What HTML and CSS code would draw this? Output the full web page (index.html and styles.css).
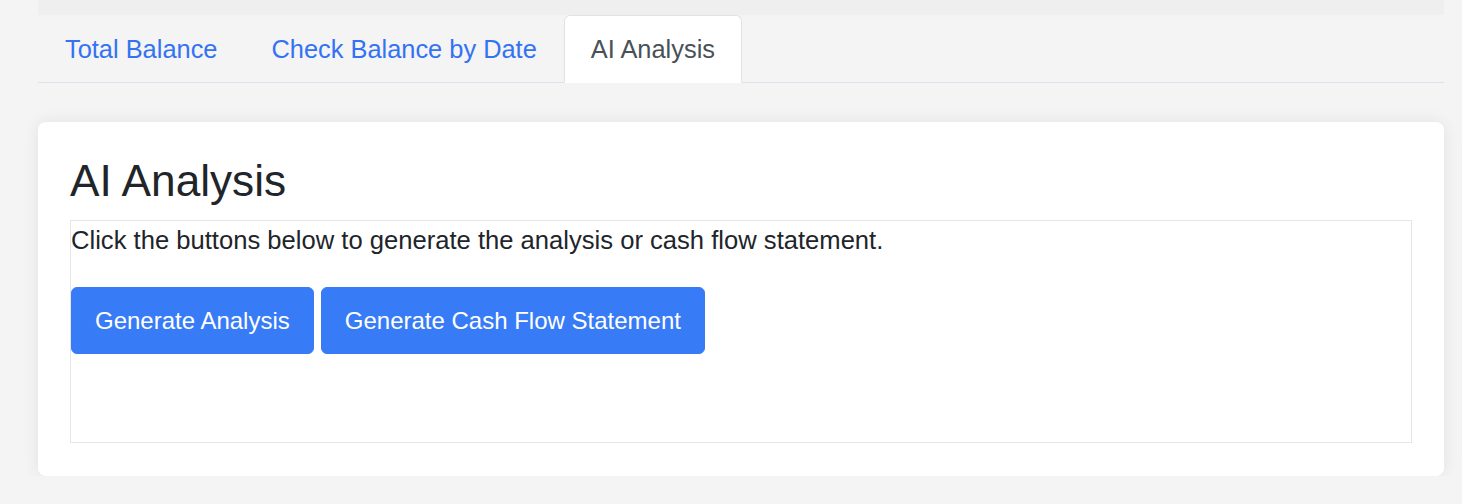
FILE: index.html
```html
<!DOCTYPE html>
<html lang="en">
<head>
<meta charset="utf-8">
<title>AI Analysis</title>
<link rel="stylesheet" href="styles.css">
</head>
<body>
<div class="container">
  <div class="top-strip"></div>
  <ul class="tabs">
    <li class="tab"><a class="tab-link" href="#">Total Balance</a></li>
    <li class="tab"><a class="tab-link" href="#">Check Balance by Date</a></li>
    <li class="tab"><a class="tab-link active" href="#">AI Analysis</a></li>
  </ul>
  <div class="card">
    <h2 class="card-title">AI Analysis</h2>
    <div class="analysis-box">
      <p class="intro">Click the buttons below to generate the analysis or cash flow statement.</p>
      <div class="actions">
        <button class="btn">Generate Analysis</button>
        <button class="btn">Generate Cash Flow Statement</button>
      </div>
    </div>
  </div>
</div>
</body>
</html>
```

FILE: styles.css
```css
* { box-sizing: border-box; }
html, body { margin: 0; padding: 0; }
body {
  background: #f4f4f4;
  font-family: "Liberation Sans", Arial, Helvetica, sans-serif;
  font-size: 25.6px;
  line-height: 1.5;
  color: #212529;
}
.container {
  margin-left: 38px;
  width: 1406px;
}
.top-strip {
  height: 15px;
  background: #efefef;
}
.tabs {
  list-style: none;
  margin: 0;
  padding: 0;
  display: flex;
  border-bottom: 1px solid #dfe1ea;
}
.tab { margin-bottom: -1px; }
.tab-link {
  display: block;
  padding: 14px 26px;
  border: 1px solid transparent;
  border-top-left-radius: 6px;
  border-top-right-radius: 6px;
  color: #3372f2;
  text-decoration: none;
  font-size: 25.4px;
  line-height: 38.4px;
}
.tab-link.active {
  background: #ffffff;
  color: #495057;
  border-color: #e0e2e8 #e0e2e8 #ffffff;
}
.card {
  margin-top: 39px;
  background: #ffffff;
  border-radius: 8px;
  box-shadow: 0 0 16px rgba(0, 0, 0, 0.08);
  padding: 32px 32px 33px;
}
.card-title {
  margin: 0 0 13px;
  font-size: 44.2px;
  font-weight: 400;
  line-height: 1.2;
}
.analysis-box {
  border: 1px solid #e6e6e6;
  min-height: 223px;
}
.intro {
  margin: 0 0 27.5px;
}
.actions {
  display: flex;
  gap: 7px;
}
.btn {
  font-family: inherit;
  font-size: 24px;
  line-height: 1.5;
  color: #ffffff;
  background: #387bf6;
  border: 1px solid #387bf6;
  border-radius: 6px;
  padding: 14px 23px;
  height: 67px;
}
```
